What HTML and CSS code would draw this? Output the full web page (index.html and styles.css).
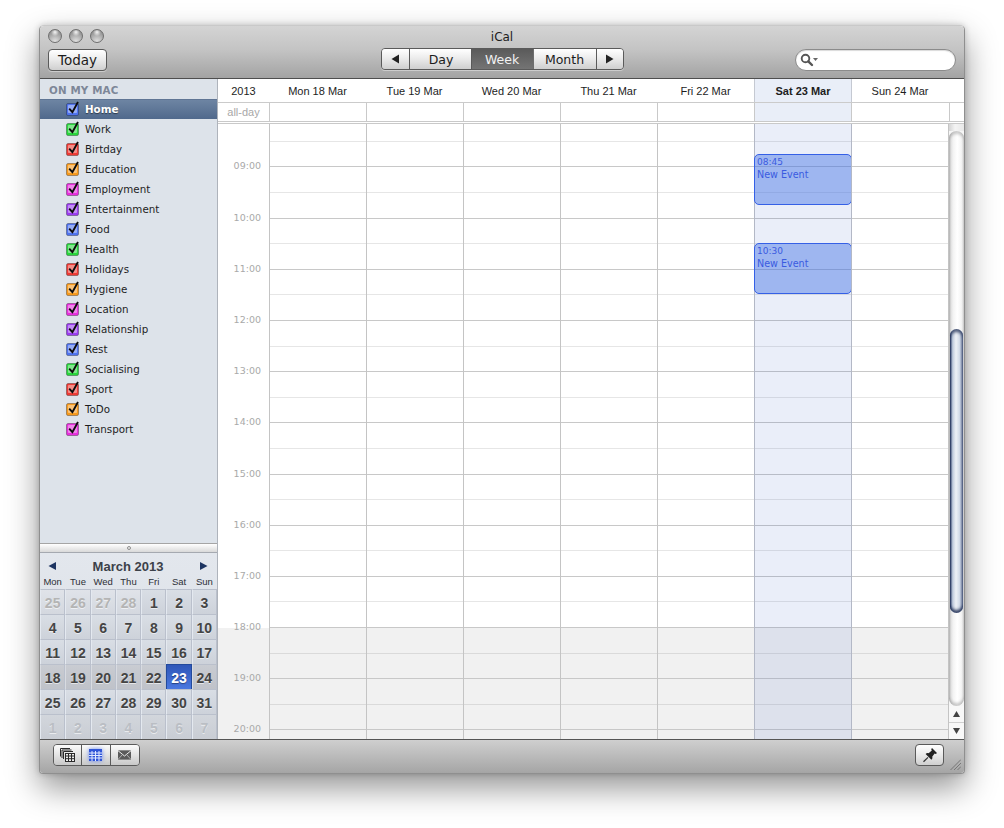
FILE: index.html
```html
<!DOCTYPE html>
<html lang="en">
<head>
<meta charset="utf-8">
<title>iCal</title>
<link rel="stylesheet" href="styles.css">
</head>
<body>
<svg class="defs" width="0" height="0" aria-hidden="true">
  <defs>
    <symbol id="cb" viewBox="0 0 14 16">
      <rect x="0.5" y="3.5" width="12" height="12" rx="1.5" fill="currentColor" stroke="#000" stroke-opacity="0.3"/>
      <rect x="2" y="5" width="9" height="8" rx="1" fill="#fff" fill-opacity="0.42"/>
      <path d="M3.2 8.6 L6.4 12.2 L12 2" fill="none" stroke="#0c0c0c" stroke-width="1.9"/>
    </symbol>
  </defs>
</svg>
<div class="window">
  <header class="toolbar">
    <div class="lights"><span class="light"></span><span class="light"></span><span class="light"></span></div>
    <div class="title">iCal</div>
    <div></div>
    <div class="tb-left"><button class="btn today">Today</button></div>
    <div class="segs">
      <span class="seg seg-arrow"><svg width="9" height="10" viewBox="0 0 9 10"><path d="M8 0.5V9.5L0.5 5Z" fill="#222"/></svg></span>
      <span class="seg seg-day">Day</span>
      <span class="seg seg-week">Week</span>
      <span class="seg seg-month">Month</span>
      <span class="seg seg-arrow seg-last"><svg width="9" height="10" viewBox="0 0 9 10"><path d="M1 0.5V9.5L8.5 5Z" fill="#222"/></svg></span>
    </div>
    <div class="tb-right">
      <div class="search">
        <svg width="20" height="14" viewBox="0 0 20 14"><circle cx="5.5" cy="5.5" r="3.8" fill="none" stroke="#555" stroke-width="1.9"/><path d="M8.3 8.3L12 12" stroke="#555" stroke-width="2.4" stroke-linecap="round"/><path d="M13 5H18L15.5 8Z" fill="#666"/></svg>
      </div>
    </div>
  </header>
  <div class="content">
    <aside class="sidebar">
      <div class="cal-list">
        <div class="group">ON MY MAC</div>
        <div class="cal sel c-blue"><svg class="cb"><use href="#cb"/></svg><span>Home</span></div>
        <div class="cal c-green"><svg class="cb"><use href="#cb"/></svg><span>Work</span></div>
        <div class="cal c-red"><svg class="cb"><use href="#cb"/></svg><span>Birtday</span></div>
        <div class="cal c-orange"><svg class="cb"><use href="#cb"/></svg><span>Education</span></div>
        <div class="cal c-magenta"><svg class="cb"><use href="#cb"/></svg><span>Employment</span></div>
        <div class="cal c-purple"><svg class="cb"><use href="#cb"/></svg><span>Entertainment</span></div>
        <div class="cal c-blue"><svg class="cb"><use href="#cb"/></svg><span>Food</span></div>
        <div class="cal c-green"><svg class="cb"><use href="#cb"/></svg><span>Health</span></div>
        <div class="cal c-red"><svg class="cb"><use href="#cb"/></svg><span>Holidays</span></div>
        <div class="cal c-orange"><svg class="cb"><use href="#cb"/></svg><span>Hygiene</span></div>
        <div class="cal c-magenta"><svg class="cb"><use href="#cb"/></svg><span>Location</span></div>
        <div class="cal c-purple"><svg class="cb"><use href="#cb"/></svg><span>Relationship</span></div>
        <div class="cal c-blue"><svg class="cb"><use href="#cb"/></svg><span>Rest</span></div>
        <div class="cal c-green"><svg class="cb"><use href="#cb"/></svg><span>Socialising</span></div>
        <div class="cal c-red"><svg class="cb"><use href="#cb"/></svg><span>Sport</span></div>
        <div class="cal c-orange"><svg class="cb"><use href="#cb"/></svg><span>ToDo</span></div>
        <div class="cal c-magenta"><svg class="cb"><use href="#cb"/></svg><span>Transport</span></div>
      </div>
      <div class="divider"><span class="dot"></span></div>
      <div class="mini">
        <div class="mini-head">
          <svg width="9" height="10" viewBox="0 0 9 10"><path d="M8 1V9L0.5 5Z" fill="#1d3461"/></svg>
          <span>March 2013</span>
          <svg width="9" height="10" viewBox="0 0 9 10"><path d="M1 1V9L8.5 5Z" fill="#1d3461"/></svg>
        </div>
        <div class="mini-dow"><span>Mon</span><span>Tue</span><span>Wed</span><span>Thu</span><span>Fri</span><span>Sat</span><span>Sun</span></div>
        <div class="mini-grid">
          <span class="d out">25</span><span class="d out">26</span><span class="d out">27</span><span class="d out">28</span><span class="d">1</span><span class="d">2</span><span class="d">3</span>
          <span class="d">4</span><span class="d">5</span><span class="d">6</span><span class="d">7</span><span class="d">8</span><span class="d">9</span><span class="d">10</span>
          <span class="d">11</span><span class="d">12</span><span class="d">13</span><span class="d">14</span><span class="d">15</span><span class="d">16</span><span class="d">17</span>
          <span class="d wk">18</span><span class="d wk">19</span><span class="d wk">20</span><span class="d wk">21</span><span class="d wk">22</span><span class="d today-cell">23</span><span class="d wk">24</span>
          <span class="d">25</span><span class="d">26</span><span class="d">27</span><span class="d">28</span><span class="d">29</span><span class="d">30</span><span class="d">31</span>
          <span class="d out2">1</span><span class="d out2">2</span><span class="d out2">3</span><span class="d out2">4</span><span class="d out2">5</span><span class="d out2">6</span><span class="d out2">7</span>
        </div>
      </div>
    </aside>
    <main class="main">
      <div class="head-row">
        <div class="year">2013</div>
        <div class="hd">Mon 18 Mar</div>
        <div class="hd">Tue 19 Mar</div>
        <div class="hd">Wed 20 Mar</div>
        <div class="hd">Thu 21 Mar</div>
        <div class="hd">Fri 22 Mar</div>
        <div class="hd hd-sat">Sat 23 Mar</div>
        <div class="hd">Sun 24 Mar</div>
        <div class="hd-gap"></div>
      </div>
      <div class="allday-row">
        <div class="year allday">all-day</div>
        <div class="ad"></div><div class="ad"></div><div class="ad"></div><div class="ad"></div><div class="ad"></div>
        <div class="ad ad-sat"></div><div class="ad"></div><div class="ad ad-end"></div>
      </div>
      <div class="body">
        <div class="week">
          <div class="slot slot-first half"><div class="time"></div><div class="line"></div></div>
          <div class="slot hour"><div class="time">09:00</div><div class="line"></div></div>
          <div class="slot half"><div class="time"></div><div class="line"></div></div>
          <div class="slot hour"><div class="time">10:00</div><div class="line"></div></div>
          <div class="slot half"><div class="time"></div><div class="line"></div></div>
          <div class="slot hour"><div class="time">11:00</div><div class="line"></div></div>
          <div class="slot half"><div class="time"></div><div class="line"></div></div>
          <div class="slot hour"><div class="time">12:00</div><div class="line"></div></div>
          <div class="slot half"><div class="time"></div><div class="line"></div></div>
          <div class="slot hour"><div class="time">13:00</div><div class="line"></div></div>
          <div class="slot half"><div class="time"></div><div class="line"></div></div>
          <div class="slot hour"><div class="time">14:00</div><div class="line"></div></div>
          <div class="slot half"><div class="time"></div><div class="line"></div></div>
          <div class="slot hour"><div class="time">15:00</div><div class="line"></div></div>
          <div class="slot half"><div class="time"></div><div class="line"></div></div>
          <div class="slot hour"><div class="time">16:00</div><div class="line"></div></div>
          <div class="slot half"><div class="time"></div><div class="line"></div></div>
          <div class="slot hour"><div class="time">17:00</div><div class="line"></div></div>
          <div class="slot half"><div class="time"></div><div class="line"></div></div>
          <div class="slot hour"><div class="time">18:00</div><div class="line"></div></div>
          <div class="slot half eve"><div class="time"></div><div class="line"></div></div>
          <div class="slot hour eve"><div class="time">19:00</div><div class="line"></div></div>
          <div class="slot half eve"><div class="time"></div><div class="line"></div></div>
          <div class="slot hour eve"><div class="time">20:00</div><div class="line"></div></div>
          <div class="slot half eve"><div class="time"></div><div class="line"></div></div>
          <div class="cols">
            <div class="col"></div><div class="col"></div><div class="col"></div><div class="col"></div><div class="col"></div>
            <div class="col col-sat">
              <div class="event event-a"><div class="ev-time">08:45</div><div class="ev-name">New Event</div></div>
              <div class="event event-b"><div class="ev-time">10:30</div><div class="ev-name">New Event</div></div>
            </div>
            <div class="col"></div>
          </div>
        </div>
        <div class="scrollbar">
          <div class="sb-cap"></div>
          <div class="track"><div class="thumb"></div></div>
          <div class="sb-arrow sb-up"><svg width="7" height="6" viewBox="0 0 7 6"><path d="M3.5 0L7 6H0Z" fill="#444"/></svg></div>
          <div class="sb-arrow"><svg width="7" height="6" viewBox="0 0 7 6"><path d="M0 0H7L3.5 6Z" fill="#444"/></svg></div>
        </div>
      </div>
    </main>
  </div>
  <footer class="bottombar">
    <div class="group-btn">
      <span class="gb">
        <svg width="15" height="14" viewBox="0 0 15 14"><g fill="none" stroke="#2a2a2a"><path d="M0.5 8.5V0.5H10"/><path d="M2 10V2H11.5"/><path d="M3.5 11V3.5H13"/></g><rect x="5.5" y="5.5" width="9" height="8" fill="#efefef" stroke="#2a2a2a"/><path d="M5.5 8H14.5M5.5 10.7H14.5M8.5 5.5V13.5M11.5 5.5V13.5" stroke="#2a2a2a"/></svg>
      </span>
      <span class="gb gb-on">
        <svg width="13" height="12" viewBox="0 0 13 12"><rect width="13" height="12" fill="#2f55d8"/><path d="M0 4H13M0 6.5H13M0 9H13M3 2V12M6.5 2V12M10 2V12" stroke="#e2eaff"/></svg>
      </span>
      <span class="gb">
        <svg width="13" height="10" viewBox="0 0 13 10"><rect width="13" height="10" fill="#5a5a5a"/><path d="M0 0.5H13M0 9.5H13" stroke="#8a8a8a"/><path d="M0 0.7L6.5 6L13 0.7" fill="none" stroke="#efefef"/><path d="M0 9.5L4.5 4.5M13 9.5L8.5 4.5" stroke="#b0b0b0"/></svg>
      </span>
    </div>
    <div class="bb-right">
      <span class="btn pin">
        <svg width="16" height="16" viewBox="0 0 16 16"><path d="M10 1L15 6L13.8 7L12.6 6.6L10.2 9.8C10.7 11 10.3 12 9.4 12.8L3.6 7C4.4 6.1 5.5 5.8 6.6 6.2L9.8 3.6L9.2 2.2Z" fill="#222"/><path d="M6 10.4L1.5 14.8" stroke="#333" stroke-width="1.2"/></svg>
      </span>
      <svg class="grip" width="11" height="11" viewBox="0 0 11 11"><path d="M0.5 11L11 0.5M4 11L11 4M7.5 11L11 7.5" stroke="#777" fill="none"/></svg>
    </div>
  </footer>
</div>
</body>
</html>
```
FILE: styles.css
```css
html, body {
  margin: 0;
  height: 828px;
  background: #fff;
  overflow: hidden;
}
body {
  padding: 25px 0 0 39px;
  box-sizing: border-box;
  font-family: "DejaVu Sans", sans-serif;
}
.defs { position: absolute; }

.window {
  width: 926px;
  height: 749px;
  box-sizing: border-box;
  display: flex;
  flex-direction: column;
  border: 1px solid #8f8f8f;
  border-top-color: #c9c9c9;
  border-radius: 5px 5px 4px 4px;
  box-shadow: 0 14px 32px rgba(0, 0, 0, 0.42), 0 0 6px rgba(0, 0, 0, 0.2);
  background: #fff;
}

/* toolbar */
.toolbar {
  height: 53px;
  box-sizing: border-box;
  flex: none;
  display: grid;
  grid-template-columns: 1fr auto 1fr;
  grid-template-rows: 22px 30px;
  background: linear-gradient(#d4d4d4, #c4c4c4 45%, #a3a3a3);
  border-bottom: 1px solid #4e4e4e;
  border-radius: 4px 4px 0 0;
}
.lights {
  display: flex;
  gap: 7px;
  padding: 3px 0 0 8px;
}
.light {
  width: 14px;
  height: 14px;
  box-sizing: border-box;
  border-radius: 50%;
  border: 1px solid #6f6f6f;
  background:
    radial-gradient(circle at 50% 18%, rgba(255, 255, 255, 0.9), rgba(255, 255, 255, 0) 35%),
    radial-gradient(circle at 50% 95%, #e2e2e2, #a9a9a9 55%, #7d7d7d);
}
.title {
  font-size: 12px;
  line-height: 22px;
  color: #1c1c1c;
  text-align: center;
}
.tb-left { padding: 1px 0 0 8px; }
.btn {
  box-sizing: border-box;
  display: inline-flex;
  align-items: center;
  justify-content: center;
  border: 1px solid #5a5a5a;
  border-radius: 4px;
  background: linear-gradient(#ffffff, #ececec 45%, #cfcfcf);
  color: #1c1c1c;
  font-family: inherit;
  padding: 0;
}
.today {
  width: 59px;
  height: 22px;
  font-size: 13.5px;
  box-shadow: 0 1px 0 rgba(255, 255, 255, 0.4);
}
.segs {
  display: flex;
  height: 22px;
  box-sizing: border-box;
  border: 1px solid #5a5a5a;
  border-radius: 4px;
  overflow: hidden;
  font-size: 12.5px;
  color: #1c1c1c;
  box-shadow: 0 1px 0 rgba(255, 255, 255, 0.4);
}
.seg {
  box-sizing: border-box;
  display: flex;
  align-items: center;
  justify-content: center;
  background: linear-gradient(#ffffff, #ececec 45%, #cfcfcf);
  border-right: 1px solid #5a5a5a;
}
.seg-arrow { width: 28px; }
.seg-last { width: 26px; border-right: 0; }
.seg-day { width: 62px; padding-left: 2px; }
.seg-week {
  width: 62px;
  border-right-color: #6e6e6e;
  background: linear-gradient(#5a5a5a, #747474);
  color: #f2f2f2;
}
.seg-month { width: 63px; }
.tb-right {
  display: flex;
  justify-content: flex-end;
  padding: 1px 8px 0 0;
}
.search {
  width: 161px;
  height: 22px;
  box-sizing: border-box;
  border: 1px solid #8b8b8b;
  border-radius: 11px;
  background: #fff;
  box-shadow: inset 0 1px 1px rgba(0, 0, 0, 0.15);
  display: flex;
  align-items: center;
  padding-left: 4px;
}

/* content */
.content {
  flex: 1;
  min-height: 0;
  display: flex;
}
.sidebar {
  width: 178px;
  flex: none;
  box-sizing: border-box;
  display: flex;
  flex-direction: column;
  background: #dde3ea;
  border-right: 1px solid #aeb3bb;
}
.cal-list { flex: 1; min-height: 0; }
.group {
  height: 20px;
  padding: 5px 0 0 9px;
  box-sizing: border-box;
  font-size: 10.3px;
  line-height: 13px;
  font-weight: bold;
  color: #7d8798;
  letter-spacing: 0.15px;
}
.cal {
  height: 20px;
  display: flex;
  align-items: center;
  padding-left: 26px;
  gap: 5px;
  font-size: 10.3px;
  color: #1e1e1e;
}
.cb {
  width: 14px;
  height: 16px;
  flex: none;
  margin-top: -3px;
}
.sel {
  background: linear-gradient(#6f86a4, #50698c);
  box-shadow: inset 0 1px 0 #5f7594;
  color: #fff;
  font-weight: bold;
  text-shadow: 0 1px 1px rgba(0, 0, 0, 0.5);
}
.c-blue .cb { color: #4f73ee; }
.c-green .cb { color: #29d63c; }
.c-red .cb { color: #ee3b35; }
.c-orange .cb { color: #f79a1c; }
.c-magenta .cb { color: #e62fdc; }
.c-purple .cb { color: #9a3cef; }

.divider {
  height: 10px;
  flex: none;
  box-sizing: border-box;
  border-top: 1px solid #a5a5a5;
  border-bottom: 1px solid #a5a9b0;
  background: linear-gradient(#fff, #d9d9d9);
  display: flex;
  align-items: center;
  justify-content: center;
}
.dot {
  width: 4px;
  height: 4px;
  box-sizing: border-box;
  border-radius: 50%;
  border: 1px solid #8f8f8f;
}
.mini {
  flex: none;
  font-family: "Liberation Sans", Arial, sans-serif;
  background: linear-gradient(#e3e7ed, #d7dce4);
}
.mini-head {
  height: 24px;
  box-sizing: border-box;
  padding: 2px 9px 0 8px;
  display: flex;
  align-items: center;
  justify-content: space-between;
  font-size: 13px;
  font-weight: bold;
  color: #3c4149;
}
.mini-dow {
  height: 12px;
  display: grid;
  grid-template-columns: repeat(7, 1fr);
  font-size: 9.5px;
  line-height: 10px;
  text-align: center;
  color: #2c2f35;
}
.mini-grid {
  display: grid;
  grid-template-columns: repeat(7, 1fr);
  grid-auto-rows: 25px;
}
.d {
  box-sizing: border-box;
  display: flex;
  align-items: center;
  justify-content: center;
  padding-top: 1px;
  font-size: 14px;
  font-weight: bold;
  color: #444;
  background: linear-gradient(#d9dee5, #cdd2da);
  border-top: 1px solid #bac0cc;
  border-left: 1px solid #e4e9f0;
  border-right: 1px solid #bac0cc;
  text-shadow: 0 1px 0 rgba(255, 255, 255, 0.6);
}
.out { color: #b4b4b4; background: linear-gradient(#e0e3e9, #d4d8df); }
.out2 { color: #babec4; background: linear-gradient(#d2d6dc, #c9cdd4); }
.wk { background: linear-gradient(#c9ccd2, #bfc2c9); border-left-color: #d8dbe1; }
.today-cell {
  background: linear-gradient(#2f57b8, #4a78e0);
  color: #fff;
  border-color: #234a9c;
  text-shadow: 0 1px 1px rgba(0, 0, 0, 0.4);
}

/* main */
.main {
  flex: 1;
  min-width: 0;
  display: flex;
  flex-direction: column;
  font-family: "Liberation Sans", Arial, sans-serif;
  font-size: 11px;
  color: #1d1d1d;
}
.head-row, .allday-row {
  display: grid;
  grid-template-columns: 51px repeat(6, 97px) 98px 1fr;
  flex: none;
}
.head-row {
  height: 24px;
  box-sizing: border-box;
  border-bottom: 1px solid #cbcbcb;
}
.year, .hd {
  display: flex;
  align-items: center;
  justify-content: center;
}
.hd-sat {
  background: #e9eef8;
  font-weight: bold;
  border-left: 1px solid #c5c9d2;
  border-right: 1px solid #c5c9d2;
  margin-right: -1px;
}
.allday-row {
  height: 21px;
  box-sizing: border-box;
  border-bottom: 3px double #c9c9c9;
}
.allday { color: #a8a8a8; }
.ad { border-left: 1px solid #c9c9c9; }
.ad-sat { background: #e9eef8; }

.body {
  flex: 1;
  min-height: 0;
  display: flex;
}
.week {
  position: relative;
  flex: 1;
  min-width: 0;
  overflow: hidden;
}
.slot {
  display: flex;
  height: 25.6px;
}
.slot-first { height: 17.81px; }
.time {
  width: 51px;
  flex: none;
  box-sizing: border-box;
  align-self: flex-end;
  height: 14px;
  margin-bottom: -6px;
  padding-right: 8px;
  text-align: right;
  font-family: "DejaVu Sans", sans-serif;
  font-size: 9.5px;
  line-height: 14px;
  color: #a9a9a9;
}
.line {
  flex: 1;
  box-sizing: border-box;
  border-bottom: 1px solid #e6e6e6;
}
.hour .line { border-bottom-color: #c8c8c8; }
.eve { background: #f1f1f1; }
.eve.half .line { border-bottom-color: #dadada; }

.cols {
  position: absolute;
  top: 0;
  bottom: 0;
  left: 51px;
  right: 0;
  display: grid;
  grid-template-columns: repeat(6, 97px) 1fr;
}
.col { border-left: 1px solid #c4c4c4; position: relative; }
.col:last-child { border-right: 1px solid #c4c4c4; }
.col-sat {
  background: rgba(60, 95, 195, 0.105);
  border-left-color: #b3b8c6;
}
.col-sat + .col { border-left-color: #b3b8c6; }
.event {
  position: absolute;
  left: -1px;
  width: 98px;
  height: 51px;
  box-sizing: border-box;
  background: rgba(72, 118, 230, 0.47);
  border: 1px solid #3560e6;
  border-radius: 5px;
  padding: 0 0 0 2px;
  font-family: "DejaVu Sans", sans-serif;
  color: #3a5be0;
}
.event-a { top: 30px; }
.event-b { top: 119px; }
.ev-time { font-size: 9px; line-height: 12px; margin-top: 1px; }
.ev-name { font-size: 9.6px; line-height: 14px; }

.scrollbar {
  width: 15px;
  flex: none;
  display: flex;
  flex-direction: column;
  background: #f6f6f6;
}
.sb-cap {
  height: 7px;
  flex: none;
  background: linear-gradient(90deg, #d4d4d4, #f4f4f4 40%, #e8e8e8);
}
.track {
  flex: 1;
  box-sizing: border-box;
  padding-top: 198px;
  border-radius: 8px 8px 8px 8px / 7px 7px 8px 8px;
  background: linear-gradient(90deg, #d6d6d6, #f4f4f4 30%, #fff 55%, #eeeeee);
  box-shadow: inset 0 3px 3px rgba(0, 0, 0, 0.2), inset 0 -3px 3px rgba(0, 0, 0, 0.2);
}
.thumb {
  height: 284px;
  margin: 0 1px;
  border-radius: 7px;
  background: linear-gradient(90deg, #33436c, #b8c4d8 16%, #eef1f6 46%, #d3dbe8 72%, #8c9ab6);
  box-shadow: inset 0 3px 3px rgba(20, 35, 75, 0.7), inset 0 -3px 3px rgba(20, 35, 75, 0.8);
}
.sb-arrow {
  height: 16px;
  flex: none;
  display: flex;
  align-items: center;
  justify-content: center;
  background: #f8f8f8;
}
.sb-up { border-bottom: 1px solid #d0d0d0; height: 17px; box-sizing: border-box; }

/* bottom bar */
.bottombar {
  height: 34px;
  flex: none;
  box-sizing: border-box;
  display: flex;
  justify-content: space-between;
  padding: 4px 0 0 13px;
  border-top: 1px solid #555;
  background: linear-gradient(#cfcfcf, #a5a5a5);
  border-radius: 0 0 3px 3px;
}
.group-btn {
  height: 22px;
  box-sizing: border-box;
  display: flex;
  border: 1px solid #5a5a5a;
  border-radius: 4px;
  overflow: hidden;
}
.gb {
  width: 28.34px;
  box-sizing: border-box;
  display: flex;
  align-items: center;
  justify-content: center;
  background: linear-gradient(#fbfbfb, #e6e6e6 45%, #c8c8c8);
  border-right: 1px solid #5a5a5a;
}
.gb:last-child { border-right: 0; }
.gb-on svg { filter: drop-shadow(0 0 2px #6f8df0); }
.bb-right {
  display: flex;
  align-items: flex-start;
  padding-right: 3px;
  gap: 6px;
}
.pin { width: 29px; height: 22px; }
.grip { margin-top: 15px; }
```
